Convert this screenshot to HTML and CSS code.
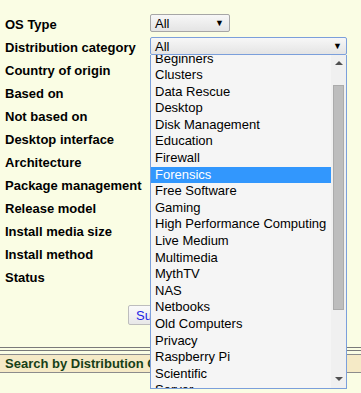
FILE: index.html
```html
<!DOCTYPE html>
<html lang="en">
<head>
    <meta charset="UTF-8">
    <meta name="viewport" content="width=device-width, initial-scale=1.0">
    <title>Search - DistroWatch</title>
    <link rel="stylesheet" href="styles.css">
</head>
<body>
    <form class="search-form">
        <div class="row"><label>OS Type</label><div class="select small">All<span class="arrow">&#9660;</span></div></div>
        <div class="row">
            <label>Distribution category</label>
            <div class="select-wrap">
                <div class="select wide focused">All<span class="arrow">&#9660;</span></div>
                <div class="dropdown">
                    <div class="options">
                        <div class="option-list">
                            <div class="option">Beginners</div>
                            <div class="option">Clusters</div>
                            <div class="option">Data Rescue</div>
                            <div class="option">Desktop</div>
                            <div class="option">Disk Management</div>
                            <div class="option">Education</div>
                            <div class="option">Firewall</div>
                            <div class="option selected">Forensics</div>
                            <div class="option">Free Software</div>
                            <div class="option">Gaming</div>
                            <div class="option">High Performance Computing</div>
                            <div class="option">Live Medium</div>
                            <div class="option">Multimedia</div>
                            <div class="option">MythTV</div>
                            <div class="option">NAS</div>
                            <div class="option">Netbooks</div>
                            <div class="option">Old Computers</div>
                            <div class="option">Privacy</div>
                            <div class="option">Raspberry Pi</div>
                            <div class="option">Scientific</div>
                            <div class="option">Server</div>
                        </div>
                    </div>
                    <div class="scrollbar">
                        <div class="scroll-btn"><span class="tri up"></span></div>
                        <div class="track"><div class="thumb"></div></div>
                        <div class="scroll-btn"><span class="tri down"></span></div>
                    </div>
                </div>
            </div>
        </div>
        <div class="row"><label>Country of origin</label></div>
        <div class="row"><label>Based on</label></div>
        <div class="row"><label>Not based on</label></div>
        <div class="row"><label>Desktop interface</label></div>
        <div class="row"><label>Architecture</label></div>
        <div class="row"><label>Package management</label></div>
        <div class="row"><label>Release model</label></div>
        <div class="row"><label>Install media size</label></div>
        <div class="row"><label>Install method</label></div>
        <div class="row"><label>Status</label></div>
        <div class="submit-row">
            <button type="submit">Submit</button>
        </div>
    </form>
    <div class="divider"></div>
    <div class="section-title">Search by Distribution Criteria</div>
</body>
</html>
```

FILE: styles.css
```css
html {
    background-color: #fafde4;
}
body {
    margin: 0;
    min-height: 100vh;
    font-family: "Liberation Sans", Arial, sans-serif;
    font-size: 13px;
    background-color: #fafde4;
    color: #000;
}
.search-form {
    padding: 11px 0 0 5px;
}
.row {
    display: flex;
    align-items: center;
    height: 23px;
}
.row label {
    width: 145px;
    padding-top: 3px;
    font-weight: bold;
}
.select-wrap {
    position: relative;
}
.select {
    box-sizing: border-box;
    display: flex;
    align-items: center;
    justify-content: space-between;
    height: 18px;
    padding: 1px 5px 0 4px;
    border: 1px solid #a6a6a6;
    border-radius: 2px;
    background: linear-gradient(#f7f7f7, #e4e4e4);
}
.select.small {
    width: 80px;
}
.select.wide {
    width: 197px;
    padding-right: 4px;
}
.select.focused {
    border-color: #7b9fdb;
}
.arrow {
    font-size: 9px;
}
.dropdown {
    position: absolute;
    top: 18px;
    left: 0;
    box-sizing: border-box;
    width: 197px;
    height: 334px;
    display: flex;
    border: 1px solid #7b9fdb;
    border-top: none;
    background-color: #f5f5f5;
    z-index: 2;
}
.options {
    flex: 1;
    overflow: hidden;
}
.option-list {
    margin-top: -4px;
}
.option {
    height: 16.6px;
    line-height: 16.6px;
    padding-left: 4px;
    white-space: nowrap;
}
.option.selected {
    background-color: #3297fd;
    color: #fff;
}
.scrollbar {
    width: 15px;
    display: flex;
    flex-direction: column;
    background-color: #f0f0f0;
}
.scroll-btn {
    height: 17px;
    display: flex;
    align-items: center;
    justify-content: center;
}
.tri {
    width: 0;
    height: 0;
    border-left: 4px solid transparent;
    border-right: 4px solid transparent;
}
.tri.up {
    border-bottom: 4px solid #505050;
}
.tri.down {
    border-top: 4px solid #505050;
}
.track {
    flex: 1;
    padding: 13px 2px 0 2px;
}
.thumb {
    height: 225px;
    background-color: #bdbdbd;
    border: 1px solid #ababab;
    box-sizing: border-box;
}
.submit-row {
    padding: 18px 0 0 123px;
}
.submit-row button {
    height: 20px;
    padding: 0 7px;
    font-family: "Liberation Sans", Arial, sans-serif;
    font-size: 13px;
    color: #1f1fe6;
    background: linear-gradient(#fafafa, #e8e8e8);
    border: 1px solid #bdbdbd;
    border-radius: 2px;
}
.divider {
    margin-top: 22px;
    height: 2px;
    border-top: 1px solid #7a7a7a;
    border-bottom: 1px solid #7a7a7a;
}
.section-title {
    margin-top: 3px;
    height: 17px;
    line-height: 17px;
    padding-left: 5px;
    border-top: 1px solid #8c8c8c;
    border-bottom: 1px solid #8c8c8c;
    background-color: #f5eac6;
    color: #173f17;
    font-weight: bold;
    white-space: nowrap;
}
```
